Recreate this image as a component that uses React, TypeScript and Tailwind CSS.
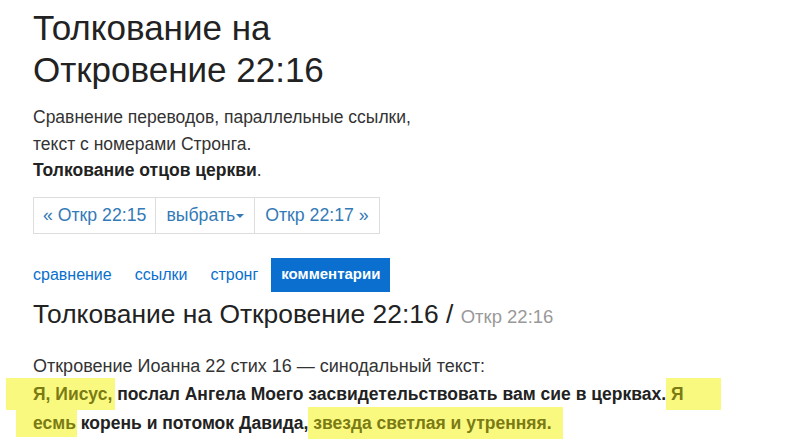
export default function App() {
  const font = "font-['Liberation_Sans',Arial,sans-serif]"
  return (
    <div className={`min-h-screen bg-white text-[#333] ${font} px-[33px] pt-[7px]`}>
      {/* Header */}
      <h1 className="text-[35px] leading-[42px] font-normal text-[#222]">
        Толкование на<br />Откровение 22:16
      </h1>
      <p className="mt-[13px] text-[17.5px] leading-[26.5px]">
        Сравнение переводов, параллельные ссылки,<br />
        текст с номерами Стронга.<br />
        <b className="text-[#222]">Толкование отцов церкви</b>.
      </p>

      {/* Pagination */}
      <div className="mt-[13px] inline-flex border border-[#ddd] text-[17.7px] text-[#337ab7] h-[37px]">
        <a className="flex items-center px-[9px]">« Откр 22:15</a>
        <a className="flex items-center px-[10px] border-l border-[#ddd]">
          выбрать
          <span className="ml-[1px] mt-[2px] border-x-[4px] border-t-[4px] border-x-transparent border-t-[#337ab7]" />
        </a>
        <a className="flex items-center px-[10px] border-l border-[#ddd]">Откр 22:17 »</a>
      </div>

      {/* Tabs */}
      <nav className="mt-[24px] -ml-[10px] flex gap-[3px] text-[16px]">
        {['сравнение', 'ссылки', 'стронг'].map(t => (
          <a key={t} className="h-[34px] px-[10px] flex items-center text-[#0a6fce]">{t}</a>
        ))}
        <a className="h-[34px] px-[10px] flex items-center bg-[#0a6fce] text-white font-bold text-[15px]">комментарии</a>
      </nav>

      <h2 className="mt-[5px] text-[26.4px] leading-[34px] text-[#222]">
        Толкование на Откровение 22:16 / <small className="text-[18.5px] text-[#999]">Откр 22:16</small>
      </h2>

      {/* Verse */}
      <p className="mt-[18px] text-[18px] leading-[28.5px]">
        Откровение Иоанна 22 стих 16 — синодальный текст:<br />
        <b className="text-[#222] text-[17.5px]">
          <span className="bg-[#f9f980] text-[#7b7b14] py-[6px] pl-[27px] -ml-[27px] pr-[3px] -mr-[3px]">Я, Иисус,</span>{' '}
          послал Ангела Моего засвидетельствовать вам сие в церквах.{' '}
          <span className="bg-[#f9f980] text-[#7b7b14] py-[6px] pl-[5px] -ml-[5px] pr-[37px] -mr-[37px]">Я</span>
          <br />
          <span className="bg-[#f9f980] text-[#7b7b14] py-[4px] pl-[17px] -ml-[17px] pr-[1px] -mr-[1px]">есмь</span>{' '}
          корень и потомок Давида,{' '}
          <span className="bg-[#f9f980] text-[#7b7b14] py-[6px] pl-[5px] -ml-[5px] pr-[11px] -mr-[11px]">звезда светлая и утренняя.</span>
        </b>
      </p>
    </div>
  )
}
